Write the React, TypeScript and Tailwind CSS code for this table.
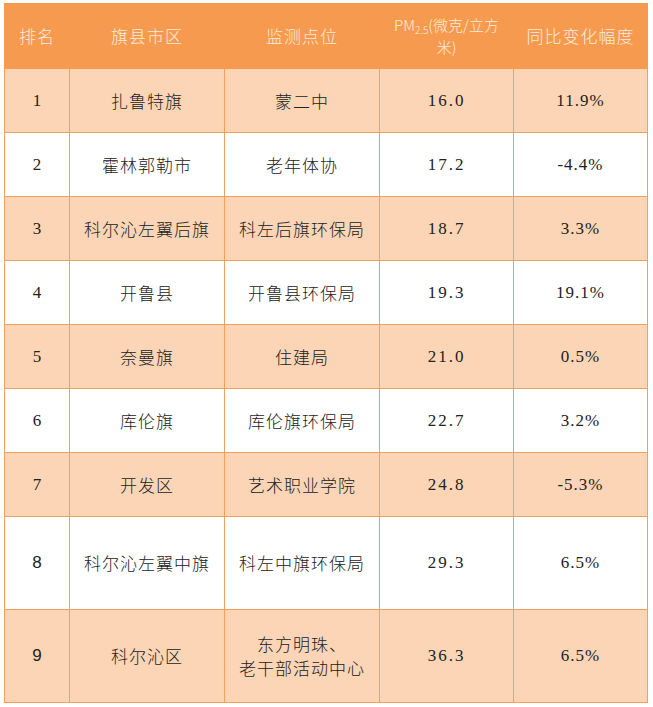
const rows = [
  { rank: "1", area: "扎鲁特旗", site: ["蒙二中"], pm: "16.0", change: "11.9%" },
  { rank: "2", area: "霍林郭勒市", site: ["老年体协"], pm: "17.2", change: "-4.4%" },
  { rank: "3", area: "科尔沁左翼后旗", site: ["科左后旗环保局"], pm: "18.7", change: "3.3%" },
  { rank: "4", area: "开鲁县", site: ["开鲁县环保局"], pm: "19.3", change: "19.1%" },
  { rank: "5", area: "奈曼旗", site: ["住建局"], pm: "21.0", change: "0.5%" },
  { rank: "6", area: "库伦旗", site: ["库伦旗环保局"], pm: "22.7", change: "3.2%" },
  { rank: "7", area: "开发区", site: ["艺术职业学院"], pm: "24.8", change: "-5.3%" },
  { rank: "8", area: "科尔沁左翼中旗", site: ["科左中旗环保局"], pm: "29.3", change: "6.5%", tall: true },
  { rank: "9", area: "科尔沁区", site: ["东方明珠、", "老干部活动中心"], pm: "36.3", change: "6.5%", tall: true },
]

export default function App() {
  return (
    <div className="min-h-[707px] w-[653px] bg-white pl-[4px] pt-[3px] font-['Noto_Sans_CJK_SC',sans-serif]">
      <table className="w-[643px] table-fixed border-collapse text-center text-[#222]">
        <colgroup>
          <col className="w-[65px]" />
          <col className="w-[155px]" />
          <col className="w-[155px]" />
          <col className="w-[134px]" />
          <col className="w-[134px]" />
        </colgroup>
        <thead>
          <tr className="h-[65px] bg-[#F59A4F] text-[17px] tracking-[1px] text-[#FDEBDC]">
            <th className="border border-[#F59A4F] font-light">排名</th>
            <th className="border border-[#F59A4F] font-light">旗县市区</th>
            <th className="border border-[#F59A4F] font-light">监测点位</th>
            <th className="border border-[#F59A4F] px-[12px] text-[15px] leading-[22px] font-light tracking-normal">
              PM<sub className="text-[10px]">2.5</sub>(微克/立方米)
            </th>
            <th className="border border-[#F59A4F] font-light">同比变化幅度</th>
          </tr>
        </thead>
        <tbody>
          {rows.map((r, i) => (
            <tr
              key={r.rank}
              className={`${r.tall ? "h-[93px]" : "h-[64px]"} ${i % 2 === 0 ? "bg-[#FBD5B5]" : "bg-white"}`}
            >
              <td
                className={
                  r.tall
                    ? "border border-[#F4A05A] font-['Liberation_Sans',sans-serif] text-[17px]"
                    : "border border-[#F4A05A] font-['Liberation_Serif',serif] text-[17px]"
                }
              >
                {r.rank}
              </td>
              <td className="border border-[#F4A05A] text-[17px] font-light tracking-[1px]">{r.area}</td>
              <td className="border border-[#F4A05A] text-[17px] leading-[24px] font-light tracking-[1px]">
                {r.site.map((s) => (
                  <div key={s}>{s}</div>
                ))}
              </td>
              <td className="border border-[#F4A05A] font-['Liberation_Serif',serif] text-[17px] tracking-[2px]">
                {r.pm}
              </td>
              <td className="border border-[#F4A05A] font-['Liberation_Serif',serif] text-[17px] tracking-[1px]">
                {r.change}
              </td>
            </tr>
          ))}
        </tbody>
      </table>
    </div>
  )
}
